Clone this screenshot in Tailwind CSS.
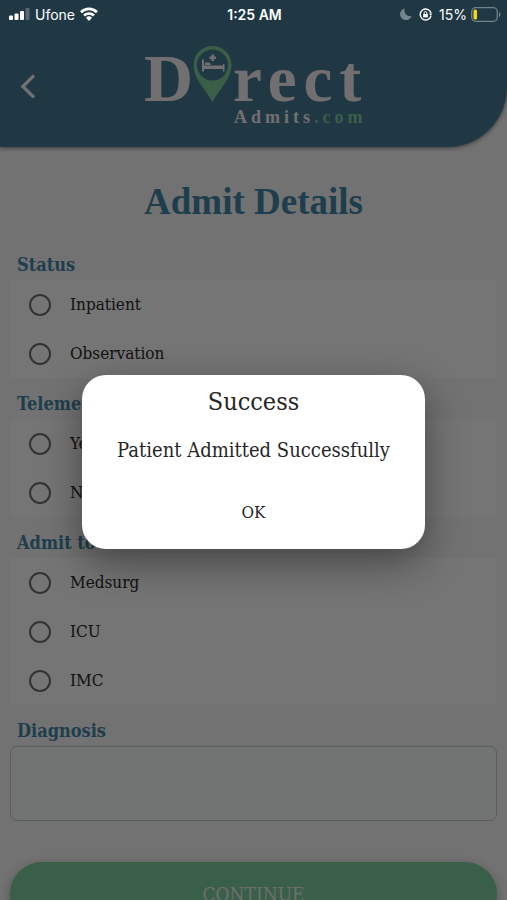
<!DOCTYPE html>
<html lang="en">
<head>
<meta charset="utf-8">
<meta name="viewport" content="width=device-width, initial-scale=1">
<title>Admit Details</title>
<script src="https://cdn.jsdelivr.net/npm/@tailwindcss/browser@4"></script>
</head>
<body class="relative h-screen overflow-hidden bg-[#e4e4e4] font-['DejaVu_Serif_Condensed','DejaVu_Serif',serif] text-[#262626]">

<!-- App header -->
<header class="relative flex justify-center rounded-br-[60px] bg-[#407088] pt-10 pb-[17px] shadow-[0_1px_4px_rgba(0,0,0,0.5)]">
  <a href="#" aria-label="Back" class="absolute top-[70px] left-4 p-1">
    <svg class="h-6 w-4" viewBox="0 0 16 24" fill="none" stroke="#e4e4e4" stroke-width="3.200"><path d="M14 1.500 2.800 12.500 14 23.500"/></svg>
  </a>
  <svg class="h-[90px] w-[228px]" viewBox="0 0 228 90" role="img" aria-label="Direct Admits.com" font-family="Liberation Serif, serif" font-weight="700">
    <text x="4" y="61" font-size="68" fill="#e4dfe0">D</text>
    <text x="93" y="61" font-size="65" letter-spacing="7" fill="#e4dfe0">rect</text>
    <text x="94" y="83" font-size="18" letter-spacing="4" fill="#e4dfe0">Admits<tspan fill="#74be92">.com</tspan></text>
    <path fill="#74be92" fill-rule="evenodd" d="M72.500 62.500C66 49 53.500 39 53.500 25a19 19 0 0 1 38 0C91.500 39 79 49 72.500 62.500ZM72.500 9.500a15.500 15.500 0 1 0 0 31a15.500 15.500 0 0 0 0-31Z"/>
    <path fill="#e4dfe0" d="M62 19.500h2v6h19v-1.500h1.500v7.500H83V29H64v2.500h-2zM65 22.500h4q1.500 0 2 2.500h-6zM71.500 14.500h2.500v2h2v2.500h-2v2h-2.500v-2h-2v-2.500h2z"/>
  </svg>
</header>

<!-- Admission form -->
<main>
  <h1 class="pt-[31px] text-center font-['Liberation_Serif',serif] text-[37px] leading-[48px] font-bold text-[#3e7c9a]">Admit Details</h1>
  <form class="px-[10px] pt-[13px]">
    <fieldset>
      <legend class="h-[41px] px-[7px] pt-[10px] text-[18px] leading-[31px] font-bold text-[#3e7c9a]">Status</legend>
      <div class="mx-px bg-[#eaeaea] text-[17px]">
        <label class="flex h-[49px] items-center gap-[19px] pl-[18px]"><input type="radio" name="status" class="size-[22px] appearance-none rounded-full border-[2px] border-[#666666]">Inpatient</label>
        <label class="flex h-[49px] items-center gap-[19px] pl-[18px]"><input type="radio" name="status" class="size-[22px] appearance-none rounded-full border-[2px] border-[#666666]">Observation</label>
      </div>
    </fieldset>
    <fieldset>
      <legend class="h-[41px] px-[7px] pt-[10px] text-[18px] leading-[31px] font-bold text-[#3e7c9a]">Telemetry</legend>
      <div class="mx-px bg-[#eaeaea] text-[17px]">
        <label class="flex h-[49px] items-center gap-[19px] pl-[18px]"><input type="radio" name="telemetry" class="size-[22px] appearance-none rounded-full border-[2px] border-[#666666]">Yes</label>
        <label class="flex h-[49px] items-center gap-[19px] pl-[18px]"><input type="radio" name="telemetry" class="size-[22px] appearance-none rounded-full border-[2px] border-[#666666]">No</label>
      </div>
    </fieldset>
    <fieldset>
      <legend class="h-[41px] px-[7px] pt-[10px] text-[18px] leading-[31px] font-bold text-[#3e7c9a]">Admit to</legend>
      <div class="mx-px bg-[#eaeaea] text-[17px]">
        <label class="flex h-[49px] items-center gap-[19px] pl-[18px]"><input type="radio" name="unit" class="size-[22px] appearance-none rounded-full border-[2px] border-[#666666]">Medsurg</label>
        <label class="flex h-[49px] items-center gap-[19px] pl-[18px]"><input type="radio" name="unit" class="size-[22px] appearance-none rounded-full border-[2px] border-[#666666]">ICU</label>
        <label class="flex h-[49px] items-center gap-[19px] pl-[18px]"><input type="radio" name="unit" class="size-[22px] appearance-none rounded-full border-[2px] border-[#666666]">IMC</label>
      </div>
    </fieldset>
    <label for="diagnosis" class="block h-[41px] px-[7px] pt-[10px] text-[18px] leading-[31px] font-bold text-[#3e7c9a]">Diagnosis</label>
    <textarea id="diagnosis" class="block h-[75px] w-full resize-none rounded-[7px] border border-[#b4bcbc] bg-[#e4e6e6] p-2"></textarea>
    <button type="button" class="mt-[41px] h-16 w-full rounded-[32px] bg-[#74be92] text-[19px] text-[#dcdcdc] shadow-[0_4px_12px_rgba(0,0,0,0.3)]">CONTINUE</button>
  </form>
</main>

<!-- Success dialog over the dimmed page -->
<div class="absolute inset-0 flex items-center justify-center bg-black/50 pt-6">
  <section role="dialog" aria-modal="true" aria-labelledby="dialog-title" class="flex w-[67.5%] flex-col items-center rounded-3xl bg-white pt-2 pb-5 text-center shadow-[0_14px_40px_rgba(0,0,0,0.4)]">
    <h2 id="dialog-title" class="text-[25px] leading-[38px]">Success</h2>
    <p class="mt-[14px] text-[20px] leading-[30px]">Patient Admitted Successfully</p>
    <button type="button" class="mt-[30px] px-6 text-[17px] leading-[34px]">OK</button>
  </section>
</div>

<!-- Phone status bar -->
<div class="absolute inset-x-0 top-0 grid h-7 grid-cols-3 items-center pr-[6px] pl-2 font-[Inter,sans-serif] text-[14px] text-white">
  <div class="flex items-center gap-[5px]">
    <svg class="h-3 w-[22px]" viewBox="0 0 22 12" fill="#fff"><rect x="1" y="7.500" width="4" height="4.500" rx="1"/><rect x="6.500" y="5.500" width="4" height="6.500" rx="1"/><rect x="12" y="3" width="4" height="9" rx="1"/><rect x="17.500" y="0" width="4" height="12" rx="1" fill-opacity=".25"/></svg>
    <span>Ufone</span>
    <svg class="h-[14px] w-[18px]" viewBox="0 0 18 14" fill="none" stroke="#fff" stroke-width="2.700"><path d="M1 5.200a11.500 11.500 0 0 1 16 0M4 8.500a7.200 7.200 0 0 1 10 0"/><path d="M6 10.800a4.300 4.300 0 0 1 6 0L9 14Z" fill="#fff" stroke="none"/></svg>
  </div>
  <div class="text-center font-semibold">1:25 AM</div>
  <div class="flex items-center justify-end">
    <svg class="mr-[7px] size-3" viewBox="0 0 12 12" fill="#75858d"><path d="M4.500.5A5.900 5.900 0 1 0 11.600 8C7.500 9 3.800 5.500 4.500.5Z"/></svg>
    <svg class="mr-[7px] size-[13px]" viewBox="0 0 13 13" fill="none" stroke="#fff" stroke-width="1.400"><path d="M12 8A5.500 5.500 0 1 1 12 5"/><path d="M10 5.500h3L12 8z" fill="#fff" stroke="none"/><rect x="4.200" y="6" width="4.600" height="3.400" fill="#fff" stroke="none"/><path d="M5.200 6V4.800a1.300 1.300 0 0 1 2.600 0V6" stroke-width="1"/></svg>
    <span class="mr-1">15%</span>
    <svg class="h-[15px] w-[30px]" viewBox="0 0 30 15" fill="none"><rect x=".7" y=".7" width="25.600" height="13.600" rx="4" stroke="#72838b" stroke-width="1.300"/><rect x="2.500" y="2.500" width="3.500" height="10" rx="1.500" fill="#f7d70a"/><path d="M28 5c2 1 2 4 0 5z" fill="#72838b"/></svg>
  </div>
</div>
</body>
</html>
